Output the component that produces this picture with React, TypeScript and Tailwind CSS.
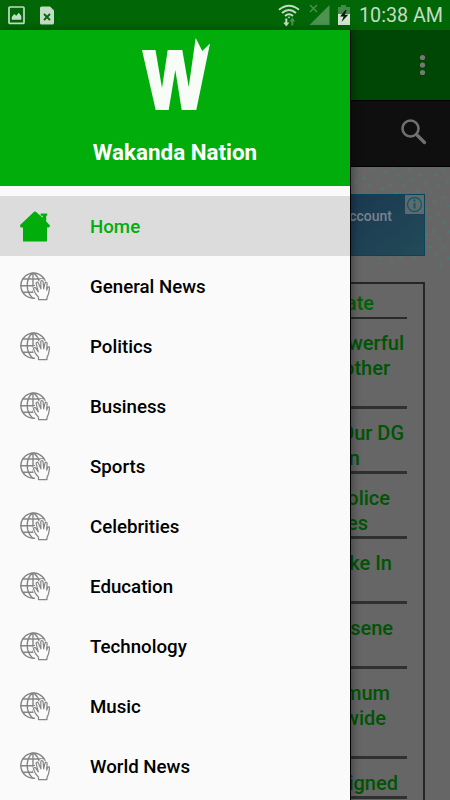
import * as React from "react"

const menu = [
  "General News",
  "Politics",
  "Business",
  "Sports",
  "Celebrities",
  "Education",
  "Technology",
  "Music",
  "World News",
]

// each line is right-aligned, pad is its distance from the row's right edge
const headlines = [
  [
    { text: "werful", pad: "pr-[3px]" },
    { text: "other", pad: "pr-[17px]" },
    { text: "", pad: "" },
  ],
  [
    { text: "Our DG", pad: "pr-[3px]" },
    { text: "n", pad: "pr-[47px]" },
  ],
  [
    { text: "olice", pad: "pr-[17px]" },
    { text: "es", pad: "pr-[39px]" },
  ],
  [
    { text: "ke In", pad: "pr-[15px]" },
    { text: "", pad: "" },
  ],
  [
    { text: "sene", pad: "pr-[14px]" },
    { text: "", pad: "" },
  ],
  [
    { text: "mum", pad: "pr-[17px]" },
    { text: "wide", pad: "pr-[21px]" },
    { text: "", pad: "" },
  ],
  [{ text: "igned", pad: "pr-[9px]" }],
]

function StatusBar() {
  return (
    <header className="flex h-[30px] shrink-0 items-center bg-[#006606] text-[#c4dcc5]">
      <svg className="ml-2" width="17" height="19" viewBox="0 0 17 19">
        <rect x="1" y="1" width="15" height="16.4" rx="1" fill="none" stroke="currentColor" strokeWidth="1.7" />
        <path d="M3.8 13.7V11l2.5-2.9 2 1.7 2.5-3 2.5 3.2v3.7z" fill="currentColor" />
      </svg>
      <svg className="ml-[15px]" width="14" height="19" viewBox="0 0 14 19">
        <path d="M1.5 .5H10l4 4V17a1.5 1.5 0 0 1-1.5 1.5h-11A1.5 1.5 0 0 1 0 17V2A1.5 1.5 0 0 1 1.5.5z" fill="currentColor" />
        <path d="M4 8l6 6M10 8l-6 6" stroke="#006606" strokeWidth="1.8" />
      </svg>
      <svg className="ml-auto" width="22" height="24" viewBox="0 0 22 24" fill="none">
        <path d="M1 6.7q10-8 20 0M4 10q7-6 14 0M7 13q4-3.5 8 0" stroke="currentColor" strokeWidth="2" />
        <path d="M9.5 13.8h3L11 15.5z" fill="currentColor" />
        <path d="M7.3 15.5v4H5.2l3.1 4 3.1-4H9.3v-4z" fill="currentColor" />
        <path d="M13.3 22.5v-4h-2l3-4 3 4h-2v4z" fill="#4b934e" />
      </svg>
      <svg className="ml-[9px]" width="21" height="22" viewBox="0 0 21 22">
        <path d="M20.5 1v20H.5z" fill="#4b934e" />
        <path d="M1 1l7 7M8 1L1 8" stroke="#4b934e" strokeWidth="1.4" />
      </svg>
      <svg className="ml-[7px] mr-px" width="14" height="21" viewBox="0 0 14 21">
        <path d="M4 0h5v2h4v7H1V2h3z" fill="#43894a" />
        <path d="M1 9h12v11H1z" fill="#d2e5d2" />
        <path d="M8.5 5L3 11.5h3.6L4.5 17l6.7-7.3H7.7l2-4.7z" fill="#071b09" />
      </svg>
      <time className="mt-px ml-[7px] mr-[7px] w-[84px] whitespace-nowrap text-[19.7px] leading-[29px]">10:38 AM</time>
    </header>
  )
}

function GlobeHand() {
  const hand =
    "M18.5 28.6v-2.4c-2-1.9-4-4.9-4.9-8.1-.4-1.6 1.6-2.2 2.4-.8l2.3 3.5-2.1-8c-.4-1.7 1.6-2.2 2.2-.6l2.5 5.6-.1-7c0-1.6 2.2-1.6 2.3 0l.6 7L25 12.1c.4-1.4 2.2-1 2.1.4l-.4 6.6 1-2.5c.5-1.2 2.1-.8 1.8.6-.5 3.6-.7 6.6-2.5 9.1v2.3z"
  return (
    <svg width="30" height="30" viewBox="0 0 30 30" fill="none" stroke="#858585" strokeWidth="1.4" strokeLinejoin="round" strokeLinecap="round">
      <path d="M14.5 27.2A12.6 12.6 0 1 1 25 9.6" />
      <path d="M13 2.2v18M12 2.2C5.5 9 5.5 20 12.5 27M14 2.2c3 2.6 4.6 5 5.2 8.3M2.8 8h20.5M.8 14.8h14M2.7 21.2h11" />
      <path d={hand} stroke="#fafafa" strokeWidth="3" />
      <path d={hand} fill="#fafafa" strokeWidth="1.2" />
    </svg>
  )
}

function Drawer() {
  return (
    <aside className="relative z-10 w-[350px] shrink-0 bg-[#fafafa] shadow-[1px_0_0_#000,3px_0_8px_rgba(0,0,0,0.35)]">
      <div className="flex h-[156px] flex-col items-center bg-[#00ad0a]">
        <svg className="mt-2 ml-[2px] shrink-0" width="72" height="72" viewBox="0 0 72 72">
          <path d="M2 12h13.5L22 50l5.7-38h14.6l6.4 37 7-49 6.6 13L70 5.5 56.3 72H41.7l-6.4-40-6.6 40h-13z" fill="#f7fcf7" />
        </svg>
        <h1 className="mt-[27px] text-[22.4px] leading-[30px] font-bold text-white">Wakanda Nation</h1>
      </div>
      <nav className="pt-[10px] text-[18.7px] font-medium">
        <a className="flex h-[60px] items-center bg-[#dcdcdc] pl-5 text-[#00ad0a]">
          <svg width="30" height="31" viewBox="0 0 30 31" fill="currentColor">
            <path d="M15 .5c-.7 0-1 .3-1.4.7L.6 13.6c-.9.9-.7 2.9 1 2.9H3v14h24v-14h1.4c1.7 0 1.9-1.9 1-2.8L26.2 10.5V4.7h1V2.4h-6.5v2.3h2v2.1l-6.3-5.6C16 .8 15.7.5 15 .5z" />
          </svg>
          <span className="mt-[2px] ml-10">Home</span>
        </a>
        {menu.map((label) => (
          <a key={label} className="flex h-[60px] items-center pl-5 text-black">
            <GlobeHand />
            <span className="mt-[2px] ml-10">{label}</span>
          </a>
        ))}
      </nav>
    </aside>
  )
}

function Page() {
  return (
    <main className="flex w-[100px] flex-col overflow-hidden bg-[#666]">
      <div className="flex h-[70px] shrink-0 items-center justify-end bg-[#004604] pr-[24px]">
        <svg width="7" height="22" viewBox="0 0 7 22" fill="#777">
          <circle cx="3.5" cy="3.5" r="2.6" />
          <circle cx="3.5" cy="11" r="2.6" />
          <circle cx="3.5" cy="18.5" r="2.6" />
        </svg>
      </div>
      <div className="flex h-[67px] shrink-0 justify-end border-y border-black bg-[#0f0f0f] pt-[18px] pr-[23px]">
        <svg width="26" height="26" viewBox="0 0 26 26" fill="none" stroke="#707070">
          <circle cx="9.5" cy="9.5" r="8" strokeWidth="2.6" />
          <path d="M16 16l7.5 7.5" strokeWidth="3.3" strokeLinecap="round" />
        </svg>
      </div>
      <div className="relative h-[115px] shrink-0 pt-[27px]">
        <svg className="absolute inset-0" width="100" height="115">
          <defs>
            <pattern id="dots" width="27" height="17" patternUnits="userSpaceOnUse" patternTransform="rotate(14)">
              <path d="M2 4l3 1M15 7l3 1M8 13l3 1M22 14l3 0" stroke="#4b7972" strokeWidth="2" />
            </pattern>
          </defs>
          <path d="M0 0h100v105L75 94 45 98 0 90z" fill="url(#dots)" />
        </svg>
        <div className="relative flex h-[62px] w-[75px] justify-end border border-[#07455f] bg-linear-to-br from-[#1b3850] to-[#224b58]">
          <span className="mt-[9px] mr-[32px] text-[14px] leading-6 font-medium text-[#77838e]">ccount</span>
          <svg className="absolute top-0 right-0" width="19" height="19" viewBox="0 0 19 19" fill="none">
            <path d="M0 0h19v19H0z" fill="#626969" />
            <circle cx="9.5" cy="9.5" r="7" stroke="#075e70" strokeWidth="1.4" />
            <path d="M9.5 8v5.5M9.5 4.5v2" stroke="#075e70" strokeWidth="2" />
          </svg>
        </div>
      </div>
      <section className="h-[530px] w-[75px] shrink-0 border-t-[2.5px] border-r-2 border-[#262626] pr-[16px] text-[20px] leading-[25px] font-medium text-[#005403]">
        <div className="flex h-[35px] justify-end border-b-2 border-[#2a2a2a] pt-[7px] pr-[33px] text-[#006204]">ate</div>
        {headlines.map((lines, i) => (
          <div key={i} className="border-b-[3px] border-[#303030] pt-[12px]">
            {lines.map((line, j) => (
              <div key={j} className="flex h-[25px] justify-end whitespace-nowrap">
                <span className={line.pad}>{line.text}</span>
              </div>
            ))}
          </div>
        ))}
      </section>
    </main>
  )
}

export default function App() {
  return (
    <div className="flex h-[800px] w-[450px] flex-col overflow-hidden font-['Roboto',sans-serif]">
      <StatusBar />
      <div className="flex min-h-0 flex-1">
        <Drawer />
        <Page />
      </div>
    </div>
  )
}
